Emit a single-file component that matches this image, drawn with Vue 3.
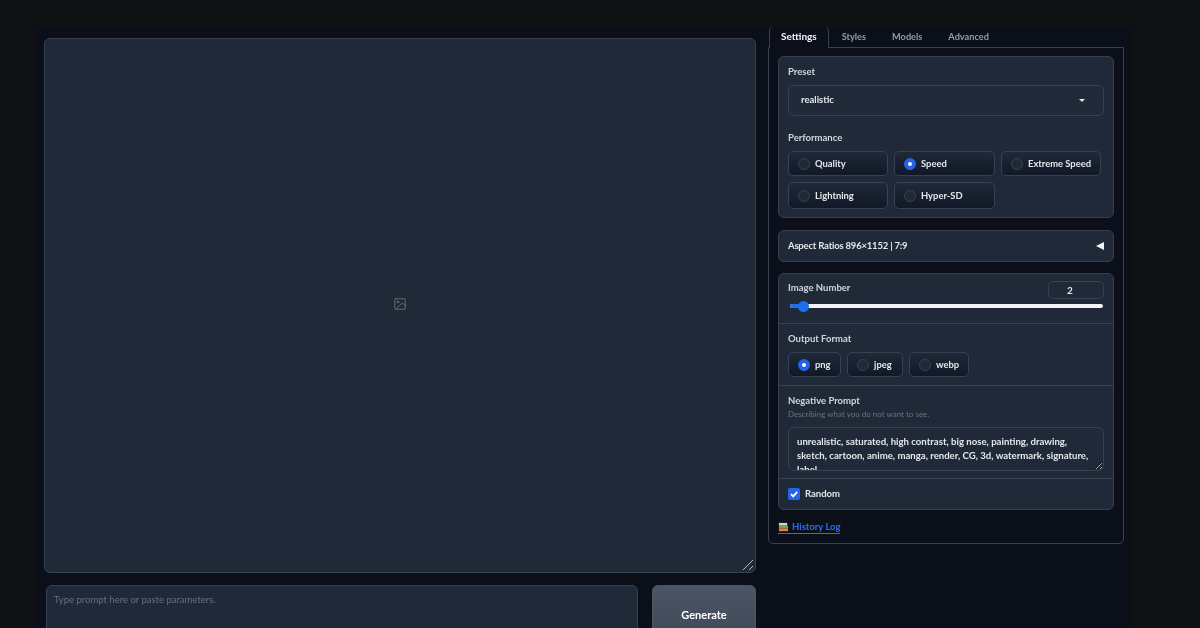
<script setup>
const perf = [
  { label: 'Quality', on: false },
  { label: 'Speed', on: true },
  { label: 'Extreme Speed', on: false },
  { label: 'Lightning', on: false },
  { label: 'Hyper-SD', on: false }
]
const formats = [
  { label: 'png', on: true },
  { label: 'jpeg', on: false },
  { label: 'webp', on: false }
]
const tabs = ['Styles', 'Models', 'Advanced']
const negative = 'unrealistic, saturated, high contrast, big nose, painting, drawing, sketch, cartoon, anime, manga, render, CG, 3d, watermark, signature, label'
</script>

<template>
  <div class="page">
    <main class="shell">
      <section class="left">
        <div class="canvas">
          <svg class="img-icon" viewBox="0 0 24 24" fill="none" stroke="currentColor" stroke-width="1.5" stroke-linecap="round" stroke-linejoin="round">
            <rect x="3" y="3" width="18" height="18" rx="2" />
            <circle cx="8.5" cy="8.5" r="1.5" />
            <polyline points="21 15 16 10 5 21" />
          </svg>
          <svg class="grip" viewBox="0 0 12 12" fill="none" stroke="#b4b8bf" stroke-width="1">
            <path d="M1 11 L11 1 M7 11 L11 7" />
          </svg>
        </div>
        <div class="bottom">
          <div class="prompt">Type prompt here or paste parameters.</div>
          <button class="generate">Generate</button>
        </div>
      </section>

      <aside class="right">
        <nav class="tabs">
          <span class="tab active">Settings</span>
          <span v-for="t in tabs" :key="t" class="tab">{{ t }}</span>
        </nav>
        <div class="tabpanel">
          <div class="panel preset">
            <div class="label">Preset</div>
            <div class="select"><span>realistic</span><i class="caret"></i></div>
            <div class="label perf-label">Performance</div>
            <div class="perf-grid">
              <label v-for="p in perf" :key="p.label" class="radio">
                <i class="dot" :class="{ on: p.on }"></i><span class="rtext">{{ p.label }}</span>
              </label>
            </div>
          </div>

          <div class="panel aspect">
            <span class="label strong">Aspect Ratios 896×1152 | 7:9</span>
            <i class="tri"></i>
          </div>

          <div class="panel stack">
            <div class="block number">
              <div class="num-head">
                <span class="label">Image Number</span>
                <span class="num">2</span>
              </div>
              <div class="slider"><i class="fill"></i><i class="thumb"></i></div>
            </div>
            <div class="block format">
              <div class="label">Output Format</div>
              <div class="format-row">
                <label v-for="f in formats" :key="f.label" class="radio fmt">
                  <i class="dot" :class="{ on: f.on }"></i><span class="rtext">{{ f.label }}</span>
                </label>
              </div>
            </div>
            <div class="block negative">
              <div class="label">Negative Prompt</div>
              <div class="desc">Describing what you do not want to see.</div>
              <textarea class="neg" readonly :value="negative"></textarea>
            </div>
            <div class="block random">
              <i class="check">
                <svg viewBox="0 0 12 12" fill="none" stroke="#fff" stroke-width="1.8"><path d="M3 6.2 L5.2 8.4 L9.2 3.8" /></svg>
              </i>
              <span class="rtext">Random</span>
            </div>
          </div>

          <a class="history">
            <svg class="books" viewBox="0 0 12 12">
              <rect x="1" y="1" width="9" height="3" fill="#d9d4c4" />
              <rect x="1" y="4" width="10" height="3" fill="#5fa85c" />
              <rect x="1" y="7" width="10" height="3" fill="#e0813c" />
            </svg>
            <span class="history-text">History Log</span>
          </a>
        </div>
      </aside>
    </main>
  </div>
</template>

<style>
html, body { margin: 0; background: #101112; overflow: hidden; }
</style>

<style scoped>
.page {
  width: 1200px;
  height: 628px;
  overflow: hidden;
  background: #101112;
  font-family: Lato, "Noto Sans", sans-serif;
  color: #e5e7eb;
  padding-top: 27px;
  padding-left: 36px;
  box-sizing: border-box;
  filter: blur(0.3px);
}
.shell {
  width: 1096px;
  height: 601px;
  box-sizing: border-box;
  background: #0b0f19;
  padding: 0 8px;
  display: flex;
  gap: 12px;
}
.left { width: 712px; padding-top: 11px; flex: none; }
.canvas {
  position: relative;
  height: 535px;
  box-sizing: border-box;
  background: #1f2937;
  border: 1px solid #374151;
  border-radius: 6px;
  display: flex;
  align-items: center;
  justify-content: center;
}
.img-icon { width: 14px; height: 14px; color: #6b7280; margin-bottom: 3px; }
.grip { position: absolute; right: 1px; bottom: 1px; width: 12px; height: 12px; }
.bottom { display: flex; gap: 14px; margin-top: 12px; padding-left: 2px; }
.prompt {
  width: 592px;
  height: 90px;
  box-sizing: border-box;
  background: #1f2937;
  border: 1px solid #374151;
  border-radius: 6px;
  padding: 8px 7px;
  font-size: 9.5px;
  color: #64708a;
}
.generate {
  width: 104px;
  height: 90px;
  box-sizing: border-box;
  border: 1px solid #4b5563;
  border-radius: 6px;
  background: linear-gradient(180deg, #4b5563, #374151);
  color: #fff;
  font-family: inherit;
  font-size: 11px;
  font-weight: 700;
  padding: 22px 0 0;
  line-height: 14px;
  display: flex;
  justify-content: center;
  align-items: flex-start;
}
.right { width: 356px; flex: none; }
.tabs { display: flex; height: 20px; align-items: stretch; padding-left: 1px; }
.tab {
  padding: 0 12px;
  font-size: 9.2px;
  font-weight: 700;
  color: #8f9bae;
  line-height: 18px;
  border: 1px solid transparent;
  border-bottom: 0;
  white-space: nowrap;
}
.tab.active {
  color: #f3f4f6;
  font-size: 10px;
  padding: 0 11px;
  border-color: #374151;
  border-top: 0;
  border-radius: 4px 4px 0 0;
  background: #0b0f19;
  position: relative;
  z-index: 1;
  margin-bottom: -1px;
}
.tabpanel {
  height: 497px;
  box-sizing: border-box;
  border: 1px solid #374151;
  border-radius: 0 0 5px 5px;
  padding: 8px 9px;
  display: flex;
  flex-direction: column;
  gap: 12px;
}
.panel {
  flex: none;
  box-sizing: border-box;
  background: #1f2937;
  border: 1px solid #374151;
  border-radius: 6px;
}
.label { font-size: 9.5px; font-weight: 700; color: #d1d5db; line-height: 13px; }
.preset { height: 162px; padding: 8px 9px; }
.select {
  margin-top: 7px;
  height: 31px;
  box-sizing: border-box;
  border: 1px solid #374151;
  border-radius: 6px;
  padding: 0 12px 2px;
  display: flex;
  align-items: center;
  justify-content: space-between;
  font-size: 9.5px;
  font-weight: 700;
  color: #e5e7eb;
}
.caret {
  width: 0; height: 0;
  border-left: 3px solid transparent;
  border-right: 3px solid transparent;
  border-top: 3px solid #e5e7eb;
  margin: 2px 6px 0 0;
}
.perf-label { margin-top: 15px; }
.perf-grid {
  margin-top: 7px;
  display: grid;
  grid-template-columns: 100px 101px 100px;
  column-gap: 6px;
  row-gap: 6px;
  grid-template-rows: 25px 27px;
}
.radio {
  box-sizing: border-box;
  border: 1px solid #374151;
  border-radius: 5px;
  background: linear-gradient(180deg, #1f2937, #111827);
  display: flex;
  align-items: center;
  padding-left: 9px;
  gap: 5px;
  font-size: 9.4px;
  font-weight: 700;
  color: #e5e7eb;
  white-space: nowrap;
}
.rtext { margin-bottom: 1px; }
.dot {
  width: 12px; height: 12px;
  box-sizing: border-box;
  border-radius: 50%;
  background: #1f2937;
  border: 1px solid #374151;
  flex: none;
}
.dot.on {
  background: #2563eb;
  border-color: #2563eb;
  position: relative;
}
.dot.on::after {
  content: "";
  position: absolute;
  left: 3px; top: 3px;
  width: 4px; height: 4px;
  border-radius: 50%;
  background: #fff;
}
.aspect {
  height: 32px;
  padding: 0 9px 2px;
  display: flex;
  align-items: center;
  justify-content: space-between;
}
.strong { color: #e5e7eb; letter-spacing: -0.2px; }
.tri {
  width: 0; height: 0;
  border-top: 4px solid transparent;
  border-bottom: 4px solid transparent;
  border-right: 8px solid #f3f4f6;
  margin-top: 2px;
}
.stack { height: 237px; margin-top: -1px; display: flex; flex-direction: column; }
.block { box-sizing: border-box; padding: 0 9px; border-bottom: 1px solid #374151; flex: none; }
.number { height: 50px; padding-top: 7px; }
.num-head { display: flex; justify-content: space-between; align-items: flex-start; }
.num {
  width: 56px;
  height: 18px;
  box-sizing: border-box;
  border: 1px solid #374151;
  border-radius: 5px;
  padding-right: 12px;
  text-align: center;
  font-size: 10px;
  font-weight: 700;
  line-height: 16px;
}
.slider {
  position: relative;
  margin: 5px 1px 0 2px;
  height: 4px;
  border-radius: 2px;
  background: #f3f4f6;
}
.fill {
  position: absolute; left: 0; top: 0; bottom: 0; width: 12px;
  background: #1f6feb; border-radius: 2px 0 0 2px;
}
.thumb {
  position: absolute; left: 8px; top: -3px;
  width: 11px; height: 11px;
  border-radius: 50%;
  background: #1f6feb;
}
.format { height: 62px; padding-top: 8px; }
.format-row { display: flex; gap: 6px; margin-top: 7px; height: 25px; }
.fmt:nth-child(1) { width: 53px; }
.fmt:nth-child(2) { width: 56px; }
.fmt:nth-child(3) { width: 60px; }
.negative { height: 93px; padding-top: 8px; }
.desc { font-size: 8px; line-height: 12px; color: #6b7280; margin-top: 1px; }
.neg {
  display: block;
  margin-top: 7px;
  width: 316px;
  height: 44px;
  box-sizing: border-box;
  background: #1f2937;
  border: 1px solid #374151;
  border-radius: 6px;
  padding: 7px 14px 6px 8px;
  color: #e5e7eb;
  font-family: inherit;
  font-size: 9.6px;
  font-weight: 700;
  line-height: 14px;
  overflow: hidden;
  outline: none;
  resize: vertical;
}
.random {
  border-bottom: 0;
  flex: 1;
  display: flex;
  align-items: center;
  gap: 5px;
  font-size: 9.5px;
  font-weight: 700;
}
.check {
  width: 12px; height: 12px;
  border-radius: 2px;
  background: #2563eb;
  display: block;
}
.check svg { display: block; width: 12px; height: 12px; }
.history {
  margin-top: -1px;
  display: flex;
  align-items: center;
  font-size: 9.5px;
  font-weight: 700;
  color: #2a6ef0;
  line-height: 12px;
  width: 62px;
  white-space: nowrap;
  border-bottom: 1px solid #2a6ef0;
}
.books { width: 11px; height: 11px; margin-right: 3px; flex: none; }
</style>
